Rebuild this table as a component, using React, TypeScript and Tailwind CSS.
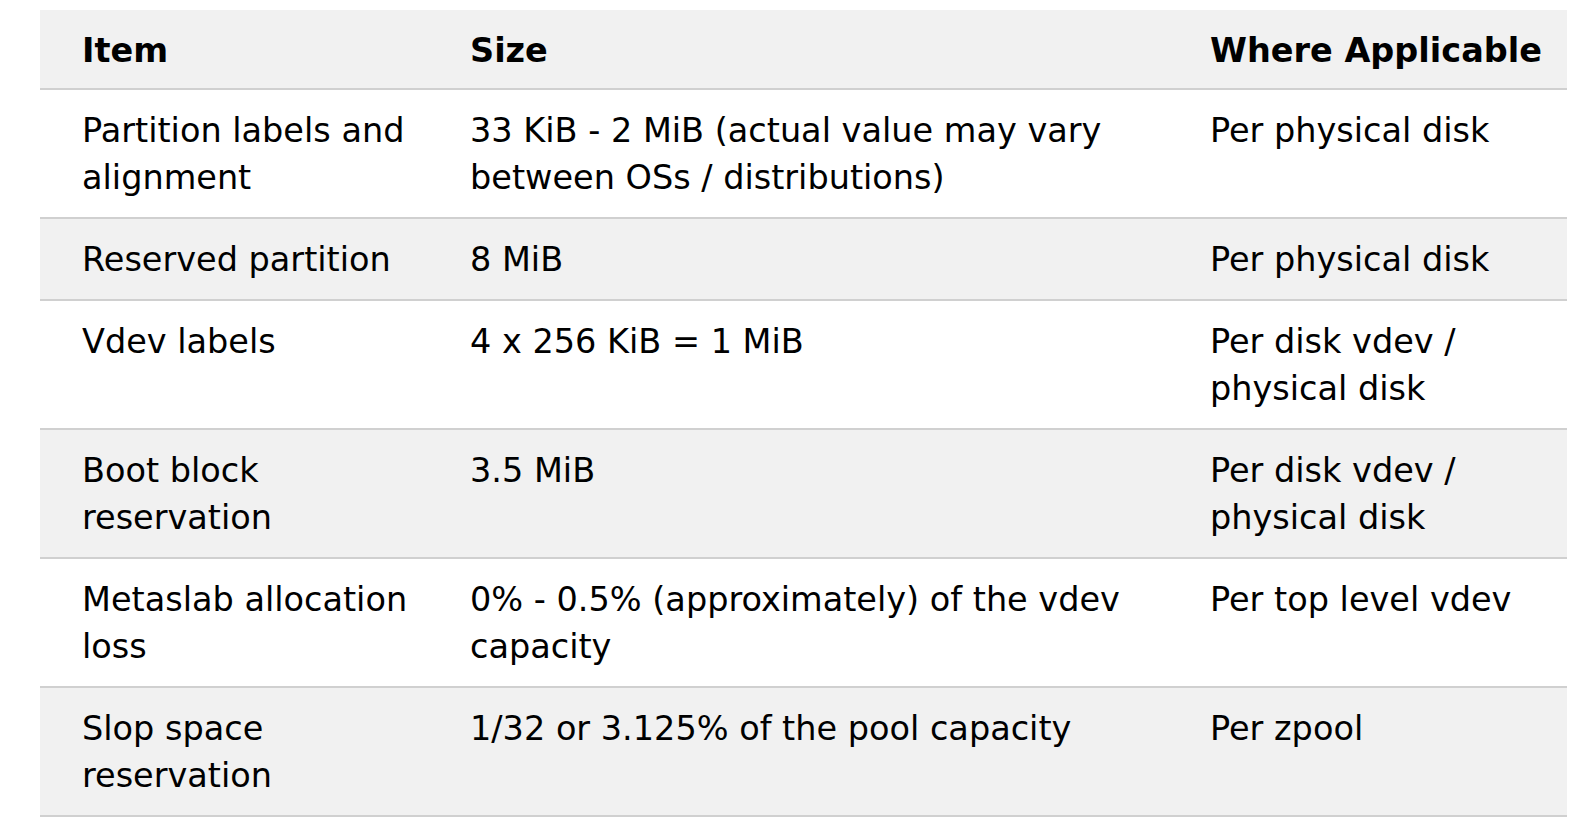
const rows = [
  { item: "Partition labels and alignment", size: "33 KiB - 2 MiB (actual value may vary between OSs / distributions)", where: "Per physical disk" },
  { item: "Reserved partition", size: "8 MiB", where: "Per physical disk" },
  { item: "Vdev labels", size: "4 x 256 KiB = 1 MiB", where: "Per disk vdev / physical disk" },
  { item: "Boot block reservation", size: "3.5 MiB", where: "Per disk vdev / physical disk" },
  { item: "Metaslab allocation loss", size: "0% - 0.5% (approximately) of the vdev capacity", where: "Per top level vdev" },
  { item: "Slop space reservation", size: "1/32 or 3.125% of the pool capacity", where: "Per zpool" },
];

const App = () => {
  return (
    <div className="min-h-screen bg-white pt-[10px] pl-[40px]">
      <table
        className="w-[1527px] table-fixed border-collapse text-left text-[33.5px] leading-[47px] text-black"
        style={{ fontFamily: '"DejaVu Sans", Verdana, sans-serif' }}
      >
        <colgroup>
          <col className="w-[388px]" />
          <col className="w-[740px]" />
          <col className="w-[399px]" />
        </colgroup>
        <thead>
          <tr className="bg-[#f1f1f1] border-b-2 border-[#d0d0d0]">
            <th className="pl-[42px] pt-[17px] pb-[14px] font-bold align-top">Item</th>
            <th className="pl-[42px] pt-[17px] pb-[14px] font-bold align-top">Size</th>
            <th className="pl-[42px] pt-[17px] pb-[14px] font-bold align-top">Where Applicable</th>
          </tr>
        </thead>
        <tbody>
          {rows.map((row, i) => (
            <tr
              key={row.item}
              className={`border-b-2 border-[#d0d0d0] ${i % 2 === 1 ? "bg-[#f1f1f1]" : "bg-white"}`}
            >
              <td className="pl-[42px] pt-[17px] pb-[16px] align-top">{row.item}</td>
              <td className="pl-[42px] pt-[17px] pb-[16px] align-top">{row.size}</td>
              <td className="pl-[42px] pt-[17px] pb-[16px] align-top">{row.where}</td>
            </tr>
          ))}
        </tbody>
      </table>
    </div>
  );
};

export default App;
